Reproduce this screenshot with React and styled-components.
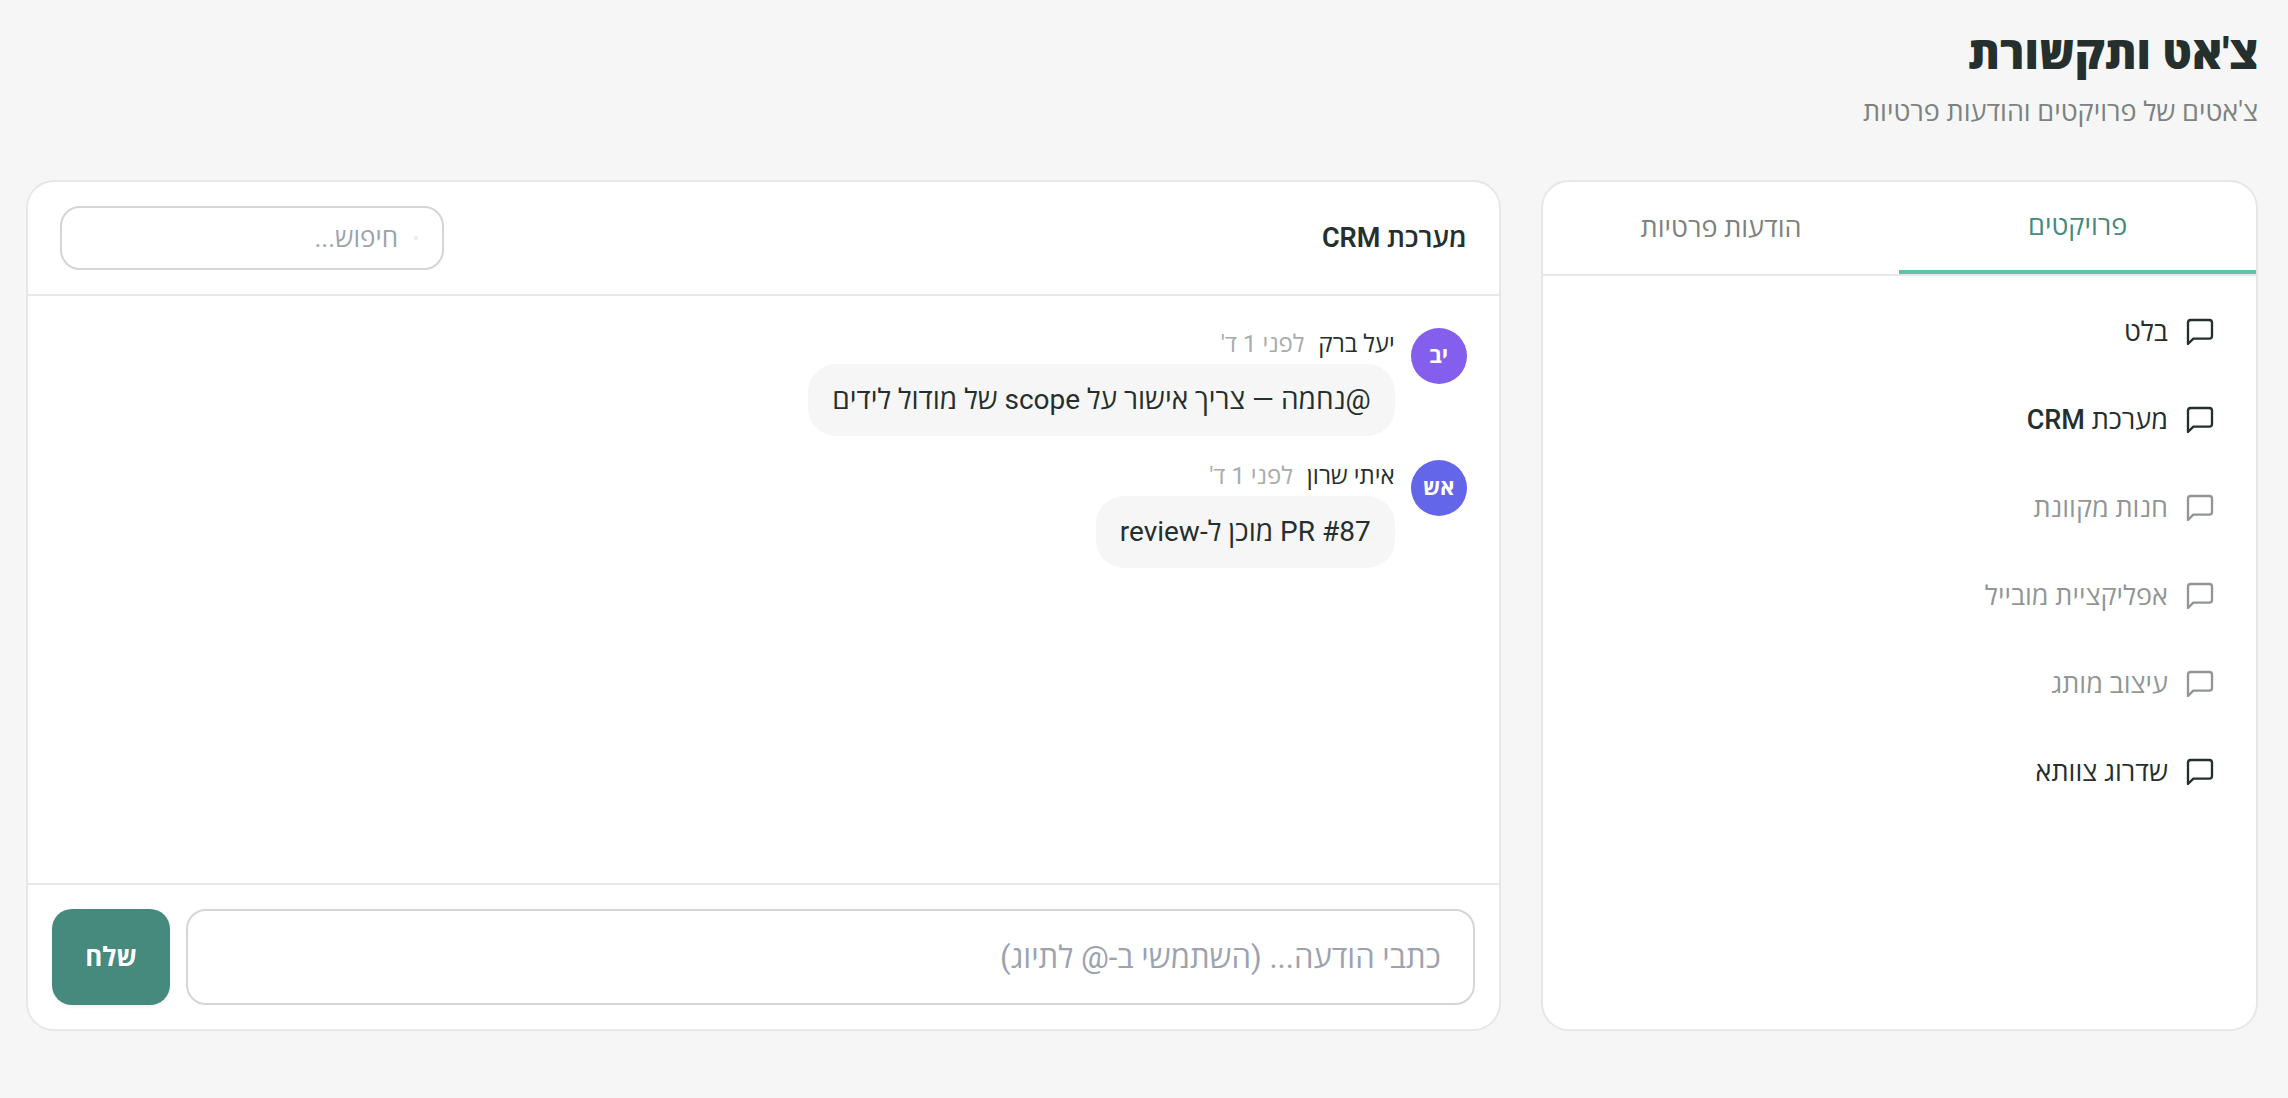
import React, { useState } from 'react'
import styled, { createGlobalStyle } from 'styled-components'

const colors = {
  page: '#f6f6f6',
  ink: '#252f2d',
  muted: '#7c8280',
  faint: '#a8acab',
  line: '#e6e7e7',
  field: '#d4d5d5',
  placeholder: '#9ca3af',
  primary: '#458a7d',
  accent: '#63bfaa',
}

const GlobalStyle = createGlobalStyle`
  * {
    box-sizing: border-box;
  }

  body {
    margin: 0;
    background: ${colors.page};
    color: ${colors.ink};
    font-family: Roboto, 'Open Sans', 'Noto Sans', sans-serif;
    font-size: 27px;
    line-height: 40px;
  }

  button,
  input {
    font: inherit;
    color: inherit;
  }
`

const Page = styled.main`
  display: flex;
  flex-direction: column;
  min-height: 100vh;
  padding: 24px 30px 67px 26px;
`

const Title = styled.h1`
  margin: 0;
  font-size: 45px;
  font-weight: 800;
  line-height: 60px;
`

const Subtitle = styled.p`
  margin: 8px 0 48px;
  color: ${colors.muted};
`

const Columns = styled.div`
  display: grid;
  flex: 1;
  grid-template-columns: repeat(3, minmax(0, 1fr));
  gap: 40px;
`

const Card = styled.section`
  display: flex;
  flex-direction: column;
  grid-column: span ${props => props.$span || 1};
  overflow: hidden;
  background: #fff;
  border: 2px solid ${colors.line};
  border-radius: 28px;
`

const Tabs = styled.div`
  display: flex;
  border-bottom: 2px solid ${colors.line};
`

const Tab = styled.button`
  flex: 1;
  height: 92px;
  padding: 0;
  background: none;
  border: 0;
  border-bottom: ${props => (props.$active ? `4px solid ${colors.accent}` : '0')};
  color: ${props => (props.$active ? colors.primary : colors.muted)};
  cursor: pointer;
`

const ProjectList = styled.ul`
  display: flex;
  flex-direction: column;
  gap: 8px;
  margin: 0;
  padding: 16px;
  list-style: none;
`

const ProjectButton = styled.button`
  display: flex;
  align-items: center;
  gap: 16px;
  width: 100%;
  padding: 20px 24px;
  background: none;
  border: 0;
  font-weight: ${props => (props.$selected ? 500 : 400)};
  opacity: ${props => (props.$dim ? 0.5 : 1)};
  cursor: pointer;
`

const ChatHeader = styled.header`
  display: flex;
  align-items: center;
  justify-content: space-between;
  padding: 24px 32px;
  border-bottom: 2px solid ${colors.line};
`

const ChatTitle = styled.h2`
  margin: 0;
  font-size: 27px;
  font-weight: 600;
`

const SearchField = styled.label`
  display: flex;
  align-items: center;
  gap: 16px;
  width: 384px;
  height: 64px;
  padding: 0 24px;
  border: 2px solid ${colors.field};
  border-radius: 20px;
`

const SearchInput = styled.input`
  flex: 1;
  min-width: 0;
  padding: 0;
  background: none;
  border: 0;
  outline: 0;
  font-size: 26px;

  &::placeholder {
    color: ${colors.placeholder};
    opacity: 1;
  }
`

const Messages = styled.div`
  display: flex;
  flex: 1;
  flex-direction: column;
  gap: 24px;
  padding: 32px;
`

const MessageRow = styled.article`
  display: flex;
  align-items: flex-start;
  gap: 16px;
`

const Avatar = styled.div`
  display: flex;
  flex: none;
  align-items: center;
  justify-content: center;
  width: 56px;
  height: 56px;
  background: ${props => props.$color};
  border-radius: 50%;
  color: #fff;
  font-size: 22px;
  font-weight: 700;
`

const MessageMeta = styled.div`
  display: flex;
  gap: 14px;
  margin-bottom: 4px;
  font-size: 24px;
  line-height: 32px;
`

const Author = styled.span`
  font-weight: 500;
`

const Time = styled.time`
  color: ${colors.faint};
`

const Bubble = styled.p`
  width: fit-content;
  margin: 0;
  padding: 16px 24px;
  background: ${colors.page};
  border-radius: 28px;
  font-size: 28px;
`

const Composer = styled.form`
  display: flex;
  gap: 16px;
  padding: 24px;
  border-top: 2px solid ${colors.line};
`

const MessageInput = styled.input`
  flex: 1;
  min-width: 0;
  height: 96px;
  padding: 0 32px;
  background: #fff;
  border: 2px solid ${colors.field};
  border-radius: 20px;
  font-size: 31px;

  &::placeholder {
    color: ${colors.placeholder};
    opacity: 1;
  }
`

const SendButton = styled.button`
  width: 118px;
  padding: 0;
  background: ${colors.primary};
  border: 0;
  border-radius: 20px;
  box-shadow: 0 2px 4px rgba(0, 0, 0, 0.06);
  color: #fff;
  font-size: 26px;
  font-weight: 700;
  cursor: pointer;
`

const ChatIcon = () => (
  <svg
    width="32"
    height="32"
    viewBox="0 0 24 24"
    fill="none"
    stroke="currentColor"
    strokeWidth="1.75"
    strokeLinecap="round"
    strokeLinejoin="round"
    aria-hidden="true"
  >
    <path d="M21 15a2 2 0 0 1-2 2H7l-4 4V5a2 2 0 0 1 2-2h14a2 2 0 0 1 2 2z" />
  </svg>
)

const SearchIcon = () => (
  <svg width="4" height="4" viewBox="0 0 24 24" fill="none" stroke={colors.faint} strokeWidth="2" aria-hidden="true">
    <circle cx="11" cy="11" r="8" />
    <path d="m21 21-4.3-4.3" />
  </svg>
)

const tabs = ['פרויקטים', 'הודעות פרטיות']

const projects = [
  { name: 'בלט' },
  { name: 'מערכת CRM' },
  { name: 'חנות מקוונת', dim: true },
  { name: 'אפליקציית מובייל', dim: true },
  { name: 'עיצוב מותג', dim: true },
  { name: 'שדרוג צוותא' },
]

const messages = [
  {
    author: 'יעל ברק',
    initials: 'יב',
    color: '#845eec',
    time: "לפני 1 ד'",
    text: '@נחמה — צריך אישור על scope של מודול לידים',
  },
  {
    author: 'איתי שרון',
    initials: 'אש',
    color: '#6466e9',
    time: "לפני 1 ד'",
    text: 'PR #87 מוכן ל-review',
  },
]

const Message = ({ author, initials, color, time, text }) => (
  <MessageRow>
    <Avatar $color={color}>{initials}</Avatar>
    <div>
      <MessageMeta>
        <Author>{author}</Author>
        <Time>{time}</Time>
      </MessageMeta>
      <Bubble>{text}</Bubble>
    </div>
  </MessageRow>
)

const App = () => {
  const [tab, setTab] = useState(tabs[0])
  const [project, setProject] = useState('מערכת CRM')

  return (
    <>
      <GlobalStyle />
      <Page dir="rtl" lang="he">
        <Title>צ'אט ותקשורת</Title>
        <Subtitle>צ'אטים של פרויקטים והודעות פרטיות</Subtitle>
        <Columns>
          <Card>
            <Tabs role="tablist">
              {tabs.map(name => (
                <Tab
                  key={name}
                  type="button"
                  role="tab"
                  aria-selected={name === tab}
                  $active={name === tab}
                  onClick={() => setTab(name)}
                >
                  {name}
                </Tab>
              ))}
            </Tabs>
            <ProjectList>
              {projects.map(({ name, dim }) => (
                <li key={name}>
                  <ProjectButton
                    type="button"
                    $dim={dim}
                    $selected={name === project}
                    onClick={() => setProject(name)}
                  >
                    <ChatIcon />
                    {name}
                  </ProjectButton>
                </li>
              ))}
            </ProjectList>
          </Card>
          <Card $span={2}>
            <ChatHeader>
              <ChatTitle>{project}</ChatTitle>
              <SearchField>
                <SearchIcon />
                <SearchInput type="text" placeholder="חיפוש..." aria-label="חיפוש" />
              </SearchField>
            </ChatHeader>
            <Messages>
              {messages.map(message => (
                <Message key={message.author} {...message} />
              ))}
            </Messages>
            <Composer onSubmit={event => event.preventDefault()}>
              <MessageInput
                type="text"
                placeholder="כתבי הודעה... (השתמשי ב-@ לתיוג)"
                aria-label="כתבי הודעה"
              />
              <SendButton type="submit">שלח</SendButton>
            </Composer>
          </Card>
        </Columns>
      </Page>
    </>
  )
}

export default App
